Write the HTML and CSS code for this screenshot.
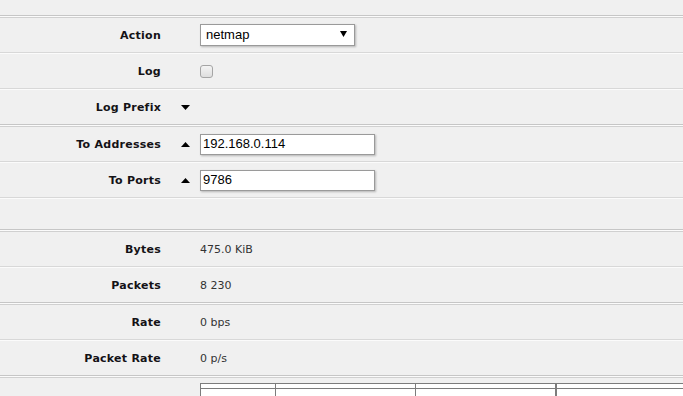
FILE: index.html
```html
<!DOCTYPE html>
<html>
<head>
<meta charset="utf-8">
<link rel="stylesheet" href="styles.css">
</head>
<body>
<div class="form">
  <div class="top-space"></div>

  <div class="sec"></div>
  <div class="row">
    <div class="label">Action</div>
    <div class="toggle"></div>
    <div class="field">
      <div class="select">
        <span>netmap</span>
        <svg class="sel-arrow" width="7" height="6" viewBox="0 0 7 6"><path d="M0 0H7L3.5 6Z" fill="#000"/></svg>
      </div>
    </div>
  </div>
  <div class="rsep"></div>
  <div class="row">
    <div class="label">Log</div>
    <div class="toggle"></div>
    <div class="field"><span class="checkbox"></span></div>
  </div>
  <div class="rsep"></div>
  <div class="row">
    <div class="label">Log Prefix</div>
    <div class="toggle"><svg width="9" height="5" viewBox="0 0 9 5"><path d="M0 0H9L4.5 5Z" fill="#000"/></svg></div>
    <div class="field"></div>
  </div>

  <div class="sec"></div>
  <div class="row">
    <div class="label">To Addresses</div>
    <div class="toggle"><svg width="9" height="5" viewBox="0 0 9 5"><path d="M0 5H9L4.5 0Z" fill="#000"/></svg></div>
    <div class="field"><div class="input">192.168.0.114</div></div>
  </div>
  <div class="rsep"></div>
  <div class="row">
    <div class="label">To Ports</div>
    <div class="toggle"><svg width="9" height="5" viewBox="0 0 9 5"><path d="M0 5H9L4.5 0Z" fill="#000"/></svg></div>
    <div class="field"><div class="input">9786</div></div>
  </div>
  <div class="rsep"></div>
  <div class="row empty"></div>

  <div class="sec"></div>
  <div class="row">
    <div class="label">Bytes</div>
    <div class="toggle"></div>
    <div class="field value">475.0 KiB</div>
  </div>
  <div class="rsep"></div>
  <div class="row">
    <div class="label">Packets</div>
    <div class="toggle"></div>
    <div class="field value">8 230</div>
  </div>

  <div class="sec"></div>
  <div class="row">
    <div class="label">Rate</div>
    <div class="toggle"></div>
    <div class="field value">0 bps</div>
  </div>
  <div class="rsep"></div>
  <div class="row">
    <div class="label">Packet Rate</div>
    <div class="toggle"></div>
    <div class="field value">0 p/s</div>
  </div>

  <div class="sec"></div>
  <div class="table-row">
    <table class="grid">
      <tr class="head"><td class="c1"></td><td class="c2"></td><td class="c3"></td><td class="c4"></td></tr>
      <tr><td class="c1"></td><td class="c2"></td><td class="c3"></td><td class="c4"></td></tr>
    </table>
  </div>
</div>
</body>
</html>
```

FILE: styles.css
```css
html, body {
  margin: 0;
  padding: 0;
  background: #f0f0f0;
  overflow: hidden;
}

.form {
  width: 683px;
  height: 396px;
  overflow: hidden;
  font-family: "DejaVu Sans", Verdana, sans-serif;
}

.top-space {
  height: 15px;
}

.sec {
  height: 1px;
  border-top: 1px solid #c6c6c6;
  border-bottom: 1px solid #d0d0d0;
  background: #fbfbfb;
}

.rsep {
  height: 1px;
  border-top: 1px solid #d8d8d8;
  background: #fbfbfb;
}

.row {
  display: flex;
  align-items: center;
  height: 34px;
}

.row.empty {
  height: 30px;
}

.label {
  width: 161px;
  text-align: right;
  font-weight: bold;
  font-size: 11px;
  letter-spacing: 0.25px;
  color: #141216;
  flex: none;
}

.toggle {
  width: 39px;
  flex: none;
  display: flex;
  justify-content: flex-end;
  padding-right: 10px;
  box-sizing: border-box;
  align-items: center;
}

.toggle svg {
  display: block;
}

.field {
  flex: 1;
  display: flex;
  align-items: center;
}

.select {
  width: 155px;
  height: 22px;
  box-sizing: border-box;
  background: #fff;
  border: 1px solid #9a9a9a;
  box-shadow: 1px 1px 2px rgba(0, 0, 0, 0.25);
  display: flex;
  align-items: center;
  justify-content: space-between;
  padding: 0 7px 1px 5px;
  font-family: "Liberation Sans", Arial, sans-serif;
  font-size: 13px;
  color: #000;
}

.sel-arrow {
  display: block;
  margin-top: -1px;
}

.checkbox {
  display: block;
  width: 11px;
  height: 11px;
  margin-top: 1px;
  border: 1px solid #a5a5a5;
  border-radius: 3px;
  background: linear-gradient(#f4f4f4, #dedede);
}

.input {
  width: 175px;
  height: 21px;
  box-sizing: border-box;
  background: #fff;
  border: 1px solid #9a9a9a;
  box-shadow: 1px 1px 2px rgba(0, 0, 0, 0.25);
  padding: 0 0 1px 2px;
  display: flex;
  align-items: center;
  font-family: "Liberation Sans", Arial, sans-serif;
  font-size: 13px;
  color: #000;
}

.value {
  font-size: 11px;
  color: #333;
  padding-top: 1px;
}

.table-row {
  padding: 5px 0 0 200px;
}

.grid {
  border-collapse: collapse;
  background: #fff;
  width: 500px;
}

.grid td {
  border: 1px solid #7c7c7c;
  padding: 0;
}

.grid .head td {
  height: 4px;
}

.grid td {
  height: 20px;
}

.grid .c1 { width: 74px; }
.grid .c2 { width: 139px; }
.grid .c3 { width: 139px; }
.grid .c4 { border-left: 2px solid #7c7c7c; }
```
